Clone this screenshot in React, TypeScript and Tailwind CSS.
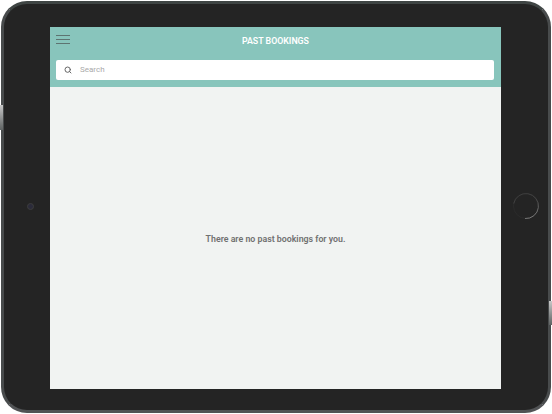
import { Search } from "lucide-react";

function HomeButton() {
  return (
    <svg width="28" height="28" viewBox="0 0 28 28" fill="none">
      <defs>
        <linearGradient id="ring" x1="0.2" y1="0" x2="0.6" y2="1">
          <stop offset="0" stopColor="#3a3a3a" />
          <stop offset="0.5" stopColor="#484848" />
          <stop offset="1" stopColor="#7a7a7a" />
        </linearGradient>
      </defs>
      <circle cx="14" cy="14" r="12.5" stroke="#2b2b2b" strokeWidth="1" />
      <path d="M1.7 11.5 A12.5 12.5 0 1 1 13 26.5" stroke="url(#ring)" strokeWidth="1" />
    </svg>
  );
}

export default function App() {
  return (
    <div className="relative w-[552px] h-[414px] bg-white overflow-hidden p-[1px] font-['Roboto',sans-serif]">
      {/* side buttons */}
      <div className="absolute left-0 top-[105px] w-[3px] h-[25px] bg-gradient-to-b from-[#c8c8c8] to-[#5f6363] z-10" />
      <div className="absolute right-0 top-[301px] w-[3px] h-[24px] bg-gradient-to-b from-[#c8c8c8] to-[#5f6363] z-10" />

      {/* tablet frame */}
      <div className="relative w-[550px] h-[412px] rounded-[26px] bg-[#242424] border-[3px] border-t-[#3f4544] border-x-[#484b4c] border-b-[#515355] flex items-center justify-center">
        {/* camera */}
        <div className="absolute left-[23px] top-[199px] w-[7px] h-[7px] rounded-full bg-[#2b2b3a] border border-[#3d3d3d]" />

        {/* home button */}
        <div className="absolute left-[508px] top-[188px]">
          <HomeButton />
        </div>

        {/* screen */}
        <div className="w-[451px] h-[362px] mt-[2px] -ml-[1px] bg-[#f1f3f2] flex flex-col">
          <header className="bg-[#88c5bc] h-[60px] shrink-0 flex flex-col">
            <div className="relative h-[27px] pt-[2px] flex items-center justify-center">
              <div className="absolute left-[6px] top-[8px] flex flex-col gap-[3px]">
                <span className="block w-[14px] h-[1px] bg-[#5d7471]" />
                <span className="block w-[14px] h-[1px] bg-[#5d7471]" />
                <span className="block w-[14px] h-[1px] bg-[#5d7471]" />
              </div>
              <span className="text-white text-[8.8px] font-semibold">PAST BOOKINGS</span>
            </div>
            <div className="px-[6px] pt-[6px] pr-[7px]">
              <div className="h-[20px] bg-white rounded-[2px] flex items-center pl-[8px]">
                <Search className="w-[8px] h-[8px] text-[#666666]" strokeWidth={3} />
                <span className="ml-[8px] text-[8px] text-[#aaaaaa]">Search</span>
              </div>
            </div>
          </header>
          <main className="flex-1 flex items-center justify-center pt-[3px]">
            <p className="text-[8.8px] font-semibold text-[#707070]">There are no past bookings for you.</p>
          </main>
        </div>
      </div>
    </div>
  );
}
